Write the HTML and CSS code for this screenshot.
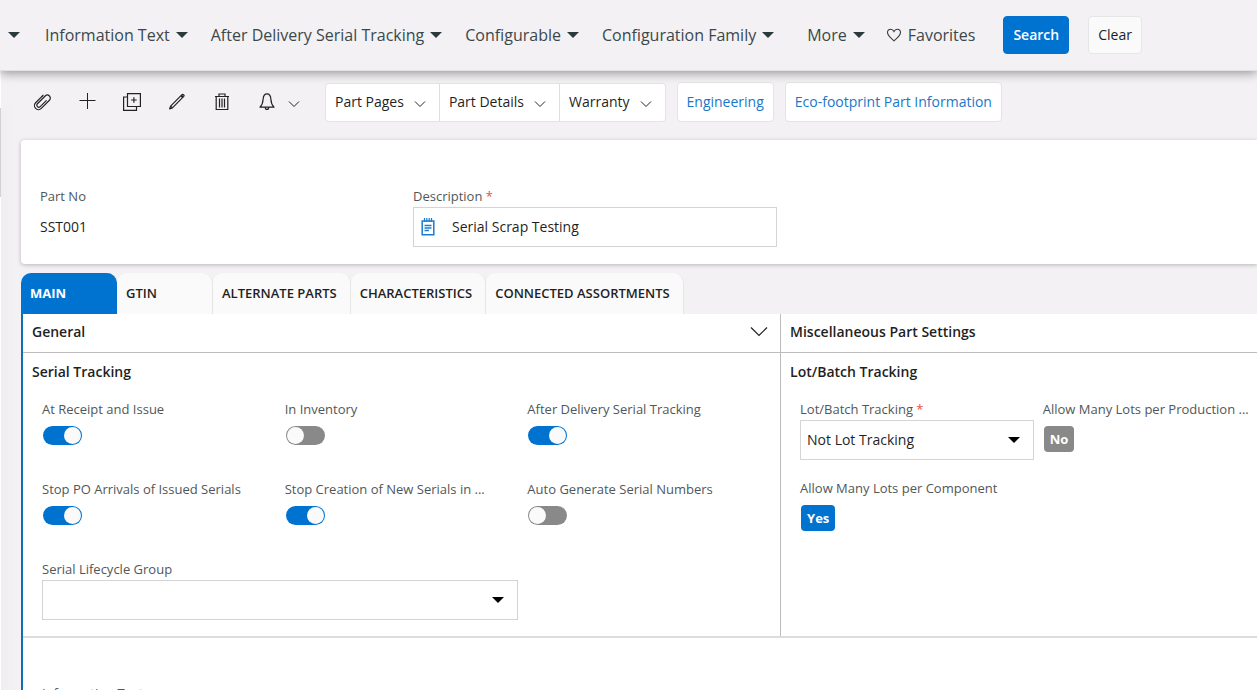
FILE: index.html
```html
<!DOCTYPE html>
<html lang="en">
<head>
    <meta charset="UTF-8">
    <meta name="viewport" content="width=device-width, initial-scale=1.0">
    <title>Part - SST001</title>
    <link rel="stylesheet" href="styles.css">
</head>
<body>
    <header class="topbar">
        <nav class="filters">
            <button type="button" class="filter" aria-label="Part"><span class="caret"></span></button>
            <button type="button" class="filter">Information Text <span class="caret"></span></button>
            <button type="button" class="filter">After Delivery Serial Tracking <span class="caret"></span></button>
            <button type="button" class="filter">Configurable <span class="caret"></span></button>
            <button type="button" class="filter">Configuration Family <span class="caret"></span></button>
        </nav>
        <button type="button" class="filter more">More <span class="caret"></span></button>
        <button type="button" class="filter favorites">
            <svg width="16" height="14" viewBox="0 0 16 14" fill="none" stroke="#2f3a3d" stroke-width="1.1"><path d="M8 12.8C5 10.4 1.5 7.7 1.5 4.6 1.5 2.6 2.9 1.2 4.7 1.2c1.4 0 2.6.8 3.3 2.2.7-1.4 1.9-2.2 3.3-2.2 1.8 0 3.2 1.4 3.2 3.4 0 3.1-3.5 5.8-6.5 8.2z"/></svg>
            Favorites
        </button>
        <button type="button" class="btn btn-primary">Search</button>
        <button type="button" class="btn">Clear</button>
    </header>

    <div class="page">
        <aside class="side"><div class="side-handle"></div></aside>

        <main class="content">
            <div class="toolbar">
                <div class="icons">
                    <button type="button" class="icon-btn" aria-label="Attachments">
                        <svg width="18" height="18" viewBox="0 0 18 18" fill="none" stroke="#222" stroke-width="1.2" stroke-linecap="round"><g transform="rotate(45 9 9)"><path d="M5 5v9a4 4 0 0 0 8 0V2.500a3 3 0 0 0-6 0V13.500a2 2 0 0 0 4 0V5"/><path d="M5 5V3.500"/></g></svg>
                    </button>
                    <button type="button" class="icon-btn" aria-label="New">
                        <svg width="18" height="18" viewBox="0 0 18 18" fill="none" stroke="#222" stroke-width="1"><path d="M9.500 0v16M1.500 7.500h16"/></svg>
                    </button>
                    <button type="button" class="icon-btn" aria-label="Duplicate">
                        <svg width="18" height="18" viewBox="0 0 18 18" fill="none" stroke="#222" stroke-width="1.200"><path d="M4.500 .6h12.900v12.900H4.500z"/><path d="M4.500 4H.6v13.400h12.900v-3.900M10.900 4.200v5.600M8.100 7h5.600"/></svg>
                    </button>
                    <button type="button" class="icon-btn" aria-label="Edit">
                        <svg width="18" height="18" viewBox="0 0 18 18" fill="none" stroke="#222" stroke-width="1.200" stroke-linejoin="round"><path d="M1.600 15.900l1-2.800L14 1.700c.5-.5 1-.5 1.400-.1l.4.4c.4.400.4.900 0 1.400L4.400 14.900z"/><path d="M13.200 2.500 15 4.300" stroke-width="2.200"/><path d="M2.600 13.100l1.800 1.800"/></svg>
                    </button>
                    <button type="button" class="icon-btn" aria-label="Delete">
                        <svg width="18" height="18" viewBox="0 0 18 18" fill="none" stroke="#222" stroke-width="1.200"><path d="M2 3.500h14M6 3.500V1h6v2.500M3.200 3.500v13h11.600v-13M6.500 5.500v9M9 5.500v9M11.500 5.500v9"/></svg>
                    </button>
                    <button type="button" class="icon-btn" aria-label="Subscribe">
                        <svg width="18" height="18" viewBox="0 0 18 18" fill="none" stroke="#222" stroke-width="1.200" stroke-linejoin="round"><path d="M9 .8C6.200.8 5.300 3.200 5.100 6.200c-.2 3.700-.9 5.700-3.100 8h14c-2.200-2.300-2.900-4.300-3.100-8C12.700 3.200 11.800.8 9 .8z"/><path d="M7.300 14.200c0 3 3.400 3 3.400 0"/></svg>
                        <svg class="chevron" width="12" height="8" viewBox="0 0 12 8"><path d="M1 1.500l5 5 5-5"/></svg>
                    </button>
                </div>
                <div class="menu-group">
                    <button type="button" class="menu-btn">Part Pages <svg class="chevron" width="12" height="8" viewBox="0 0 12 8"><path d="M1 1.500l5 5 5-5"/></svg></button>
                    <button type="button" class="menu-btn">Part Details <svg class="chevron" width="12" height="8" viewBox="0 0 12 8"><path d="M1 1.500l5 5 5-5"/></svg></button>
                    <button type="button" class="menu-btn">Warranty <svg class="chevron" width="12" height="8" viewBox="0 0 12 8"><path d="M1 1.500l5 5 5-5"/></svg></button>
                </div>
                <a href="#" class="link-btn">Engineering</a>
                <a href="#" class="link-btn">Eco-footprint Part Information</a>
            </div>

            <section class="card">
                <div class="field">
                    <span class="label">Part No</span>
                    <span class="value">SST001</span>
                </div>
                <div class="field">
                    <label for="description">Description <span class="required">*</span></label>
                    <div class="text-box">
                        <svg width="14" height="18" viewBox="0 0 14 18" fill="none" stroke="#1b7bd0" stroke-width="1.500"><path d="M1.200 3h11.600v13.800H1.200z"/><path d="M3.500 0v4M5.800 0v4M8.200 0v4M10.500 0v4" stroke-width="1.200"/><path d="M3.500 7.500h7M3.500 10h7M3.500 12.500h4.500" stroke-width="1.300"/></svg>
                        <input type="text" id="description" value="Serial Scrap Testing">
                    </div>
                </div>
            </section>

            <div class="tabs" role="tablist">
                <button type="button" class="tab active" role="tab">MAIN</button>
                <button type="button" class="tab" role="tab">GTIN</button>
                <button type="button" class="tab" role="tab">ALTERNATE PARTS</button>
                <button type="button" class="tab" role="tab">CHARACTERISTICS</button>
                <button type="button" class="tab" role="tab">CONNECTED ASSORTMENTS</button>
            </div>

            <div class="tab-body">
                <div class="panels">
                    <section class="panel">
                        <div class="panel-head">
                            <h2>General</h2>
                            <svg class="chevron" width="18" height="12" viewBox="0 0 18 12"><path d="M1 1.500l8 8 8-8"/></svg>
                        </div>
                        <h3>Serial Tracking</h3>
                        <div class="fields">
                            <div class="field">
                                <label for="receipt">At Receipt and Issue</label>
                                <input type="checkbox" class="toggle" id="receipt" checked>
                            </div>
                            <div class="field">
                                <label for="inventory">In Inventory</label>
                                <input type="checkbox" class="toggle" id="inventory">
                            </div>
                            <div class="field">
                                <label for="after">After Delivery Serial Tracking</label>
                                <input type="checkbox" class="toggle" id="after" checked>
                            </div>
                            <div class="field">
                                <label for="arrivals">Stop PO Arrivals of Issued Serials</label>
                                <input type="checkbox" class="toggle" id="arrivals" checked>
                            </div>
                            <div class="field">
                                <label for="creation">Stop Creation of New Serials in ...</label>
                                <input type="checkbox" class="toggle" id="creation" checked>
                            </div>
                            <div class="field">
                                <label for="auto">Auto Generate Serial Numbers</label>
                                <input type="checkbox" class="toggle" id="auto">
                            </div>
                            <div class="field wide">
                                <label for="lifecycle">Serial Lifecycle Group</label>
                                <select id="lifecycle"><option></option></select>
                            </div>
                        </div>
                    </section>

                    <section class="panel">
                        <div class="panel-head">
                            <h2>Miscellaneous Part Settings</h2>
                        </div>
                        <h3>Lot/Batch Tracking</h3>
                        <div class="fields fields-cut">
                            <div class="field">
                                <label for="lot">Lot/Batch Tracking <span class="required">*</span></label>
                                <select id="lot"><option>Not Lot Tracking</option></select>
                            </div>
                            <div class="field">
                                <span class="label">Allow Many Lots per Production ...</span>
                                <span class="badge badge-no">No</span>
                            </div>
                            <div class="field">
                                <span class="label">Allow Many Lots per Component</span>
                                <span class="badge">Yes</span>
                            </div>
                        </div>
                    </section>
                </div>

                <div class="info">
                    <span class="label">Information Text</span>
                </div>
            </div>
        </main>
    </div>
</body>
</html>
```
FILE: styles.css
```css
* {
    margin: 0;
    padding: 0;
    box-sizing: border-box;
}

body {
    display: flex;
    flex-direction: column;
    height: 100vh;
    overflow: hidden;
    background-color: #f3f1f4;
    color: #1f1f1f;
    font-family: "Open Sans", "Noto Sans", sans-serif;
    font-size: 14px;
    line-height: 20px;
}

button, input, select {
    font: inherit;
    color: inherit;
}

button {
    border: none;
    background: none;
    cursor: pointer;
    white-space: nowrap;
}

/* top bar */
.topbar {
    display: flex;
    flex-shrink: 0;
    align-items: center;
    height: 71px;
    padding-left: 8px;
    background-color: #f3f1f4;
    border-bottom: 1px solid #e2e0e3;
    box-shadow: 0 2px 10px rgba(0, 0, 0, 0.4);
    z-index: 1;
}

.filters {
    display: flex;
    gap: 23px;
}

.filter {
    display: flex;
    align-items: center;
    gap: 6px;
    color: #3b484b;
    font-size: 16px;
}

.filter:first-child {
    margin-right: 2px;
}

.filter.more {
    margin: 0 0 0 33px;
}

.favorites {
    margin-left: 21px;
}

.caret {
    border-left: 6px solid transparent;
    border-right: 6px solid transparent;
    border-top: 6px solid #2a393c;
}

.btn {
    height: 38px;
    margin-left: 19px;
    padding: 0 9px;
    border: 1px solid #e6e6e6;
    border-radius: 4px;
    background-color: #fafafa;
}

.btn-primary {
    margin-left: 28px;
    border-color: #0073d1;
    background-color: #0073d1;
    color: white;
    font-weight: 600;
}

/* page */
.page {
    display: flex;
    flex: 1;
    min-height: 0;
}

.side {
    width: 1px;
    margin-right: 20px;
    padding-top: 37px;
    background-color: white;
    box-shadow: 2px 36px 16px rgba(0, 0, 0, 0.22);
}

.side-handle {
    height: 89px;
    background-color: #d2d0d3;
}

.content {
    flex: 1;
    min-width: 0;
}

.toolbar {
    display: flex;
    align-items: center;
    gap: 11px;
    padding: 11px 0 18px 12px;
}

.icons {
    display: flex;
    gap: 27px;
    margin-right: 14px;
}

.icon-btn {
    display: flex;
    align-items: center;
    gap: 12px;
}

.chevron {
    fill: none;
    stroke: #222;
    stroke-width: 1.2;
}

.menu-group {
    display: flex;
    gap: 1px;
    border: 1px solid #e4e4e4;
    border-radius: 4px;
    background-color: #dedede;
    overflow: hidden;
}

.menu-btn {
    display: flex;
    align-items: center;
    gap: 10px;
    height: 37px;
    padding: 0 13px 0 9px;
    background-color: white;
}

.icon-btn .chevron,
.menu-btn .chevron {
    margin-top: 4px;
    stroke-width: 1;
}

.link-btn {
    padding: 9px;
    border: 1px solid #e4e4e4;
    border-radius: 4px;
    background-color: white;
    color: #1878c8;
    text-decoration: none;
    white-space: nowrap;
}

.card {
    display: grid;
    grid-template-columns: repeat(3, 1fr);
    gap: 9px;
    padding: 46px 107px 17px 19px;
    border-radius: 4px 0 0 4px;
    background-color: white;
    box-shadow: 0 1px 4px rgba(0, 0, 0, 0.25);
}

.field {
    display: flex;
    flex-direction: column;
    align-items: flex-start;
    min-width: 0;
}

label, .label {
    height: 21px;
    color: #50575a;
    font-size: 13px;
    white-space: nowrap;
}

.required {
    color: #e8504a;
}

.value {
    padding: 10px 0;
}

.text-box {
    display: flex;
    align-items: center;
    gap: 17px;
    width: 100%;
    height: 40px;
    padding: 0 7px;
    border: 1px solid #d4d4d4;
}

.text-box input {
    flex: 1;
    border: none;
    outline: none;
}

/* tabs */
.tabs {
    display: flex;
    margin-top: 9px;
}

.tab {
    min-width: 96px;
    height: 41px;
    padding: 0 13px 1px 9px;
    border-right: 1px solid #e6e6e6;
    border-radius: 10px 10px 0 0;
    background-color: #fafafa;
    font-size: 13px;
    font-weight: 600;
    text-align: left;
}

.tab.active {
    border-color: #0073d1;
    background-color: #0073d1;
    color: white;
    font-weight: 700;
}

.tab-body {
    height: 100%;
    border-left: 2px solid #0f6fb0;
    background-color: white;
}

.panels {
    display: grid;
    grid-template-columns: 61.35% 1fr;
    border-bottom: 2px solid #dcdcdc;
}

.panel {
    min-width: 0;
}

.panel + .panel {
    border-left: 1px solid #bdbdbd;
}

.panel-head {
    display: flex;
    justify-content: space-between;
    align-items: center;
    height: 39px;
    padding: 0 12px 2px 9px;
    border-bottom: 1px solid #bdbdbd;
}

h2, h3 {
    font-size: 14px;
    font-weight: 600;
}

h3 {
    padding: 9px;
}

.fields {
    display: grid;
    grid-template-columns: repeat(3, 1fr);
    gap: 20px 9px;
    padding: 8px 19px 16px;
}

.fields .field {
    min-height: 60px;
}

.fields-cut {
    grid-template-columns: 12fr 11fr;
    row-gap: 18px;
    padding-right: 0;
}

.wide {
    grid-column: span 2;
}

.toggle {
    display: flex;
    width: 39px;
    height: 19px;
    margin: 6px 0 0 1px;
    padding: 1px;
    border-radius: 10px;
    background-color: #898989;
    appearance: none;
    cursor: pointer;
}

.toggle::before {
    content: "";
    width: 17px;
    height: 17px;
    border-radius: 50%;
    background-color: #fafafa;
}

.toggle:checked {
    justify-content: flex-end;
    background-color: #0073d1;
}

select {
    width: 100%;
    height: 40px;
    padding: 0 6px;
    border: 1px solid #d4d4d4;
    border-radius: 0;
    background: white url("data:image/svg+xml,%3Csvg xmlns='http://www.w3.org/2000/svg' width='12' height='6'%3E%3Cpath d='M0 0h12L6 6z'/%3E%3C/svg%3E") no-repeat right 13px center;
    appearance: none;
}

.badge {
    margin: 6px 0 0 1px;
    padding: 3px 6px;
    border-radius: 4px;
    background-color: #0073d1;
    color: white;
    font-size: 13px;
    font-weight: 700;
}

.badge-no {
    background-color: #898989;
}

.info {
    padding: 45px 19px;
}
```
